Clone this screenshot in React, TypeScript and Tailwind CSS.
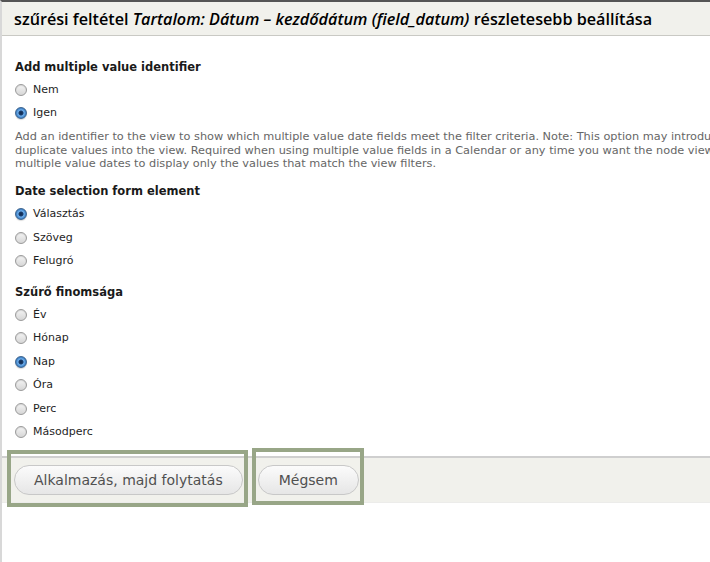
import React from "react";

const Radio = ({ checked }: { checked?: boolean }) =>
  checked ? (
    <span className="inline-block h-[12px] w-[12px] shrink-0 rounded-full border border-[#3d6590] bg-[radial-gradient(circle,#10294d_0px,#1a3c6b_2px,#6fb0ee_3px,#3a7cc0_5px,#2a5f9a_6px)] shadow-[0_1px_1px_rgba(0,0,0,0.15)]" />
  ) : (
    <span className="inline-block h-[12px] w-[12px] shrink-0 rounded-full border border-[#9a9a9a] bg-[linear-gradient(#f4f4f4,#d6d6d6)] shadow-[inset_0_1px_1px_rgba(0,0,0,0.12)]" />
  );

const Option = ({ label, checked }: { label: string; checked?: boolean }) => (
  <div className="flex h-[23.5px] items-center gap-[6px]">
    <Radio checked={checked} />
    <span className="text-[11px] text-[#1e1e1e]">{label}</span>
  </div>
);

const Heading = ({ children }: { children: React.ReactNode }) => (
  <h3 className="text-[11.5px] leading-[17px] font-bold text-[#1a1a1a]">{children}</h3>
);

export default function App() {
  return (
    <div className="flex min-h-[562px] w-[710px] flex-col overflow-hidden border-l-2 border-t-2 border-l-[#d8d8d8] border-t-[#555] bg-white font-['DejaVu_Sans',sans-serif]">
      <div className="flex h-[34px] items-center border-b border-[#c9c9c4] bg-[#f1f1ec] px-[12px] pt-[1px] font-['Open_Sans',sans-serif] text-[16.2px] font-semibold whitespace-nowrap text-black">
        szűrési feltétel&nbsp;
        <i>Tartalom: Dátum – kezdődátum (field_datum)</i>
        &nbsp;részletesebb beállítása
      </div>

      <div className="px-[13px] pt-[23px]">
        <Heading>Add multiple value identifier</Heading>
        <div className="mt-[2px]">
          <Option label="Nem" />
          <Option label="Igen" checked />
        </div>
        <p className="mt-[5px] text-[11.3px] leading-[13.5px] whitespace-nowrap text-[#666]">
          Add an identifier to the view to show which multiple value date fields meet the filter criteria. Note: This option may introduce
          <br />
          duplicate values into the view. Required when using multiple value fields in a Calendar or any time you want the node view of
          <br />
          multiple value dates to display only the values that match the view filters.
        </p>

        <div className="mt-[12px]">
          <Heading>Date selection form element</Heading>
        </div>
        <div className="mt-[3px]">
          <Option label="Választás" checked />
          <Option label="Szöveg" />
          <Option label="Felugró" />
        </div>

        <div className="mt-[11px]">
          <Heading>Szűrő finomsága</Heading>
        </div>
        <div className="mt-[2px]">
          <Option label="Év" />
          <Option label="Hónap" />
          <Option label="Nap" checked />
          <Option label="Óra" />
          <Option label="Perc" />
          <Option label="Másodperc" />
        </div>
      </div>

      <div className="mt-[12px] flex h-[47px] items-center gap-[15px] border-t-2 border-b border-t-[#cfcfcf] border-b-[#ececea] bg-[#f1f1ec] px-[12px]">
        <div className="relative">
          <button className="h-[30px] rounded-full border border-[#c8c8c8] bg-[linear-gradient(#fbfbfb,#e6e6e6)] px-[19px] text-[14px] text-[#505050]">
            Alkalmazás, majd folytatás
          </button>
          <span className="pointer-events-none absolute -top-[15px] -right-[5px] -bottom-[12px] -left-[7px] border-4 border-[#98a687]" />
        </div>
        <div className="relative">
          <button className="h-[30px] rounded-full border border-[#c8c8c8] bg-[linear-gradient(#fbfbfb,#e6e6e6)] px-[20px] text-[14px] text-[#505050]">
            Mégsem
          </button>
          <span className="pointer-events-none absolute -top-[17px] -right-[5px] -bottom-[10px] -left-[6px] border-4 border-[#98a687]" />
        </div>
      </div>
    </div>
  );
}
